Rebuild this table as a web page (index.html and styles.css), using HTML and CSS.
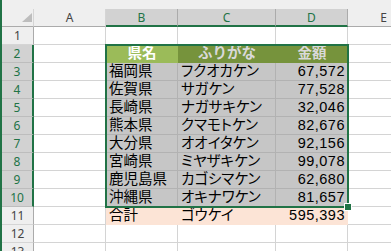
FILE: index.html
```html
<!DOCTYPE html>
<html lang="ja">
<head>
<meta charset="utf-8">
<link rel="stylesheet" href="styles.css">
</head>
<body>
<div class="sheet">
  <div class="strip"></div>

  <div class="corner"><svg width="32" height="17" viewBox="0 0 32 17"><polygon points="30,4 30,13 20,13" fill="#bdbdbd"/></svg></div>
  <div class="ch">A</div>
  <div class="ch on">B</div>
  <div class="ch on">C</div>
  <div class="ch on">D</div>
  <div class="ch">E</div>

  <div class="rh">1</div>
  <div class="c"></div><div class="c"></div><div class="c"></div><div class="c"></div><div class="c"></div>

  <div class="rh on">2</div>
  <div class="c"></div>
  <div class="c hd1">県名</div>
  <div class="c hd2">ふりがな</div>
  <div class="c hd2">金額</div>
  <div class="c"></div>

  <div class="rh on">3</div>
  <div class="c"></div><div class="c g">福岡県</div><div class="c g kana">フクオカケン</div><div class="c g num">67,572</div><div class="c"></div>

  <div class="rh on">4</div>
  <div class="c"></div><div class="c g">佐賀県</div><div class="c g kana">サガケン</div><div class="c g num">77,528</div><div class="c"></div>

  <div class="rh on">5</div>
  <div class="c"></div><div class="c g">長崎県</div><div class="c g kana">ナガサキケン</div><div class="c g num">32,046</div><div class="c"></div>

  <div class="rh on">6</div>
  <div class="c"></div><div class="c g">熊本県</div><div class="c g kana">クマモトケン</div><div class="c g num">82,676</div><div class="c"></div>

  <div class="rh on">7</div>
  <div class="c"></div><div class="c g">大分県</div><div class="c g kana">オオイタケン</div><div class="c g num">92,156</div><div class="c"></div>

  <div class="rh on">8</div>
  <div class="c"></div><div class="c g">宮崎県</div><div class="c g kana">ミヤザキケン</div><div class="c g num">99,078</div><div class="c"></div>

  <div class="rh on">9</div>
  <div class="c"></div><div class="c g">鹿児島県</div><div class="c g kana">カゴシマケン</div><div class="c g num">62,680</div><div class="c"></div>

  <div class="rh on">10</div>
  <div class="c"></div><div class="c g">沖縄県</div><div class="c g kana">オキナワケン</div><div class="c g num">81,657</div><div class="c"></div>

  <div class="rh">11</div>
  <div class="c"></div><div class="c p">合計</div><div class="c p kana">ゴウケイ</div><div class="c p num">595,393</div><div class="c"></div>

  <div class="rh">12</div>
  <div class="c"></div><div class="c"></div><div class="c"></div><div class="c"></div><div class="c"></div>

  <div class="rh">13</div>
  <div class="c"></div><div class="c"></div><div class="c"></div><div class="c"></div><div class="c"></div>

  <div class="sel"><span class="handle"></span></div>
</div>
</body>
</html>
```
FILE: styles.css
```css
html, body {
  margin: 0;
  background: #ffffff;
}
body {
  font-family: "Liberation Sans", "Noto Sans CJK JP", sans-serif;
}
.sheet {
  position: relative;
  display: grid;
  grid-template-columns: 32px 72px 72px 98px 72px 72px;
  grid-template-rows: 9px 18px repeat(13, 18px);
  border-left: 2px solid #217346;
  width: 391px;
  height: 251px;
  box-sizing: border-box;
  overflow: hidden;
}
.strip {
  grid-column: 1 / -1;
  background: #efefef;
}
.corner {
  background: #efefef;
  border-right: 1px solid #d5d5d5;
  border-bottom: 1px solid #ababab;
  box-sizing: border-box;
  overflow: hidden;
}
.corner svg {
  display: block;
}
.ch {
  background: #efefef;
  border-right: 1px solid #d5d5d5;
  border-bottom: 1px solid #ababab;
  box-sizing: border-box;
  display: flex;
  align-items: center;
  justify-content: center;
  font-family: "Noto Sans", sans-serif;
  font-size: 12px;
  color: #444444;
  padding-bottom: 1px;
}
.ch.on {
  background: #d2d2d2;
  color: #217346;
  border-right-color: #ababab;
  border-bottom: 2px solid #217346;
  padding-bottom: 0;
}
.rh {
  background: #efefef;
  border-right: 1px solid #ababab;
  border-bottom: 1px solid #d5d5d5;
  box-sizing: border-box;
  display: flex;
  align-items: center;
  justify-content: center;
  font-family: "Noto Sans", sans-serif;
  font-size: 12px;
  color: #444444;
}
.rh.on {
  background: #d2d2d2;
  color: #217346;
  border-right: 2px solid #217346;
  border-bottom-color: #bdbdbd;
}
.c {
  border-right: 1px solid #d4d4d4;
  border-bottom: 1px solid #d4d4d4;
  box-sizing: border-box;
  display: flex;
  align-items: flex-end;
  padding: 0 2px 0 3px;
  font-size: 14.5px;
  line-height: 17px;
  color: #000000;
  white-space: nowrap;
  overflow: hidden;
}
.c.g {
  background: #c6c6c6;
  border-color: #b2b2b2;
}
.c.hd1 {
  background: #9bbb59;
  border-color: #9bbb59;
  color: #ffffff;
  font-weight: bold;
  justify-content: center;
}
.c.hd2 {
  background: #76933c;
  border-color: #76933c;
  color: #d9d9d9;
  font-weight: bold;
  justify-content: center;
}
.c.p {
  background: #fce4d6;
  border-color: #fce4d6;
}
.kana {
  font-feature-settings: "palt";
}
.num {
  justify-content: flex-end;
  letter-spacing: 0.5px;
}
.sel {
  position: absolute;
  grid-column: 3 / 6;
  grid-row: 4 / 13;
  top: -1px;
  left: -1px;
  right: -1px;
  bottom: -1px;
  border: 2px solid #217346;
  pointer-events: none;
}
.handle {
  position: absolute;
  right: -5px;
  bottom: -5px;
  width: 6px;
  height: 6px;
  background: #217346;
  border: 1px solid #ffffff;
}
```
